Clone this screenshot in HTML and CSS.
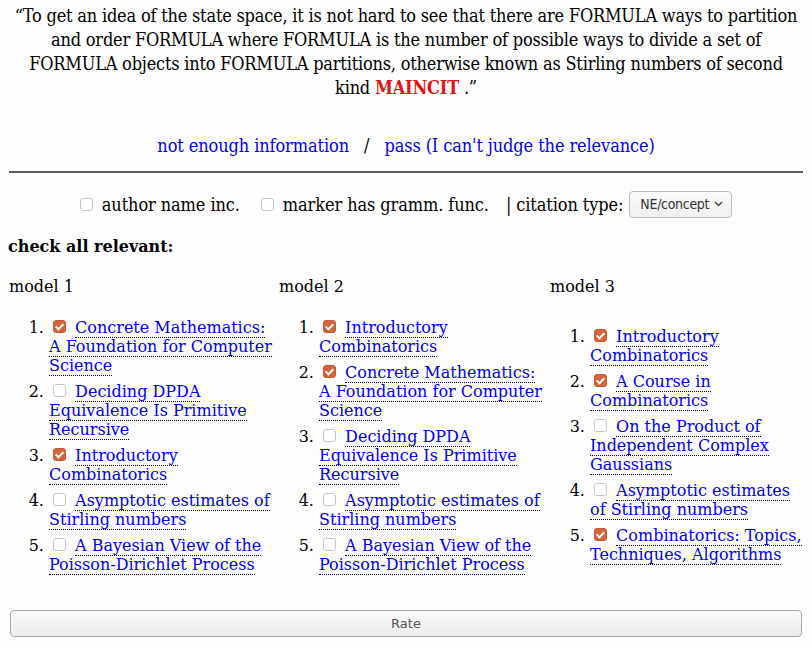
FILE: index.html
```html
<!DOCTYPE html>
<html>
<head>
<meta charset="utf-8">
<link rel="stylesheet" href="styles.css">
</head>
<body>
<p class="quote">“To get an idea of the state space, it is not hard to see that there are FORMULA ways to partition and order FORMULA where FORMULA is the number of possible ways to divide a set of FORMULA objects into FORMULA partitions, otherwise known as Stirling numbers of second kind <span class="maincit">MAINCIT</span> .”</p>
<p class="skip"><a href="#">not enough information</a><span class="sep">/</span><a href="#">pass (I can't judge the relevance)</a></p>
<hr class="rule">
<div class="flags">
  <label class="flag1"><input type="checkbox" class="cb"> author name inc.</label>
  <label class="flag2"><input type="checkbox" class="cb"> marker has gramm. func.</label>
  <span class="ctype">| citation type:</span>
  <span class="select">NE/concept <svg width="9" height="6" viewBox="0 0 9 6"><path d="M1 1 L4.5 4.5 L8 1" fill="none" stroke="#444" stroke-width="1.4"/></svg></span>
</div>
<p class="check">check all relevant:</p>
<div class="models">
  <div class="model">
    <div class="mname">model 1</div>
    <ol>
      <li><input type="checkbox" class="cb" checked> <a href="#">Concrete Mathematics: A Foundation for Computer Science</a></li>
      <li><input type="checkbox" class="cb"> <a href="#">Deciding DPDA Equivalence Is Primitive Recursive</a></li>
      <li><input type="checkbox" class="cb" checked> <a href="#">Introductory Combinatorics</a></li>
      <li><input type="checkbox" class="cb"> <a href="#">Asymptotic estimates of Stirling numbers</a></li>
      <li><input type="checkbox" class="cb"> <a href="#">A Bayesian View of the Poisson-Dirichlet Process</a></li>
    </ol>
  </div>
  <div class="model">
    <div class="mname">model 2</div>
    <ol>
      <li><input type="checkbox" class="cb" checked> <a href="#">Introductory Combinatorics</a></li>
      <li><input type="checkbox" class="cb" checked> <a href="#">Concrete Mathematics: A Foundation for Computer Science</a></li>
      <li><input type="checkbox" class="cb"> <a href="#">Deciding DPDA Equivalence Is Primitive Recursive</a></li>
      <li><input type="checkbox" class="cb"> <a href="#">Asymptotic estimates of Stirling numbers</a></li>
      <li><input type="checkbox" class="cb"> <a href="#">A Bayesian View of the Poisson-Dirichlet Process</a></li>
    </ol>
  </div>
  <div class="model">
    <div class="mname">model 3</div>
    <ol class="lower">
      <li><input type="checkbox" class="cb" checked> <a href="#">Introductory Combinatorics</a></li>
      <li><input type="checkbox" class="cb" checked> <a href="#">A Course in Combinatorics</a></li>
      <li><input type="checkbox" class="cb"> <a href="#">On the Product of Independent Complex Gaussians</a></li>
      <li><input type="checkbox" class="cb"> <a href="#">Asymptotic estimates of Stirling numbers</a></li>
      <li><input type="checkbox" class="cb" checked> <a href="#">Combinatorics: Topics, Techniques, Algorithms</a></li>
    </ol>
  </div>
</div>
<button class="rate">Rate</button>
</body>
</html>
```
FILE: styles.css
```css
html { background: #fdfdfd; }
body {
  margin: 8px;
  font-family: "DejaVu Serif", serif;
  font-size: 16px;
  color: #000;
}
a { color: #0000ee; text-decoration: none; }
.quote, .skip, .flags {
  font-family: "DejaVu Serif Condensed", "DejaVu Serif", serif;
  font-stretch: condensed;
}
.quote {
  margin: -4px 0 0;
  padding: 0 5px;
  font-size: 18px;
  letter-spacing: -0.2px;
  line-height: 24px;
  text-align: center;
}
.maincit { color: #e51010; font-weight: bold; }
.skip {
  margin: 34px 0 0;
  font-size: 18px;
  letter-spacing: -0.1px;
  text-align: center;
  line-height: 24px;
}
.sep { margin: 0 15px; }
.rule {
  margin: 13px 1px 0;
  border: 0;
  border-top: 2px solid #5a5a5a;
  height: 0;
}
.flags {
  margin-top: 17px;
  display: flex;
  justify-content: center;
  align-items: center;
  font-size: 18px;
  letter-spacing: -0.1px;
  height: 28px;
}
.flags label { display: flex; align-items: center; gap: 9px; }
.flag1 { margin-right: 21px; }
.flag2 { margin-right: 17px; }
.ctype { margin-right: 6px; }
.select {
  display: inline-flex;
  align-items: center;
  gap: 5px;
  height: 25px;
  padding: 0 8px 0 10px;
  border: 1px solid #bdbdbd;
  border-radius: 4px;
  background: linear-gradient(#fbfbfb, #f0f0f0);
  font-family: "DejaVu Sans", sans-serif;
  font-size: 14px;
  letter-spacing: -0.3px;
  color: #333;
}
.cb {
  appearance: none;
  -webkit-appearance: none;
  width: 13px;
  height: 13px;
  margin: 0;
  border: 1px solid #c6c6c6;
  border-radius: 3px;
  background: #fff;
  vertical-align: 0px;
  position: relative;
}
.cb:checked {
  background: #d2653b;
  border-color: #c25a32;
}
.cb:checked::after {
  content: "";
  position: absolute;
  left: 3px;
  top: 1px;
  width: 3px;
  height: 6px;
  border: solid #fff;
  border-width: 0 2px 2px 0;
  transform: rotate(45deg);
}
.check {
  margin: 19px 0 0;
  font-weight: bold;
}
.models {
  display: grid;
  grid-template-columns: 263px 263px 1fr;
  column-gap: 7px;
  padding-left: 1px;
  margin-top: 21px;
}
.model:last-child { padding-left: 1px; }
.mname { line-height: 19px; }
ol {
  margin: 22px 0 0;
  padding-left: 40px;
}
ol.lower { margin-top: 31px; }
li { line-height: 19px; margin-bottom: 7px; }
li .cb { margin-left: 4px; margin-right: 4px; }
li a { border-bottom: 1px dotted #000; }
.rate {
  display: block;
  width: 792px;
  margin: 29px 0 0 2px;
  height: 27px;
  border: 1px solid #a9a9a9;
  border-radius: 4px;
  background: linear-gradient(#fbfbfb, #ececec);
  font-family: "DejaVu Sans", sans-serif;
  font-size: 13px;
  color: #555;
}
```
